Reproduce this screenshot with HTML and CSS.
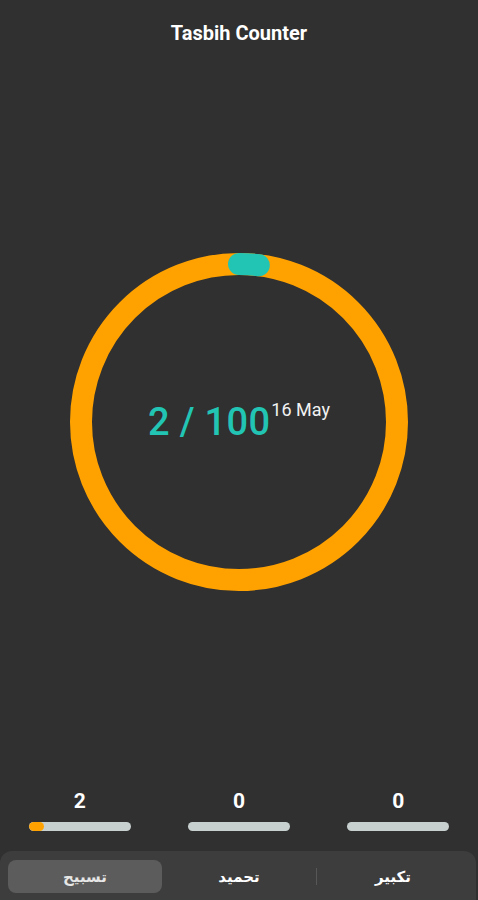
FILE: index.html
```html
<!DOCTYPE html>
<html lang="en">
<head>
<meta charset="utf-8">
<title>Tasbih Counter</title>
<link rel="stylesheet" href="styles.css">
</head>
<body>
<div class="app">
  <header class="header">Tasbih Counter</header>
  <main class="main">
    <div class="ring">
      <svg class="ring-svg" width="338" height="338" viewBox="0 0 338 338">
        <circle cx="169" cy="169" r="158" fill="none" stroke="#ffa200" stroke-width="22"/>
        <path d="M169 11 A158 158 0 0 1 188.8 12.25" fill="none" stroke="#22c4b4" stroke-width="22" stroke-linecap="round"/>
      </svg>
      <div class="ring-center">
        <span class="count">2 / 100</span><span class="date">16 May</span>
      </div>
    </div>
  </main>
  <section class="stats">
    <div class="stat">
      <div class="stat-num">2</div>
      <div class="bar"><div class="bar-fill" style="width:15%"></div></div>
    </div>
    <div class="stat">
      <div class="stat-num">0</div>
      <div class="bar"></div>
    </div>
    <div class="stat">
      <div class="stat-num">0</div>
      <div class="bar"></div>
    </div>
  </section>
  <nav class="tabs">
    <div class="tab active">تسبيح</div>
    <div class="tab">تحميد</div>
    <div class="tab divided">تكبير</div>
  </nav>
</div>
</body>
</html>
```
FILE: styles.css
```css
* { box-sizing: border-box; }
html, body {
  margin: 0;
  padding: 0;
  background: #303030;
  font-family: Roboto, "Noto Sans", "DejaVu Sans", sans-serif;
  color: #fff;
}
.app {
  width: 478px;
  height: 900px;
  display: flex;
  flex-direction: column;
}
.header {
  padding-top: 21px;
  height: 44px;
  line-height: 24px;
  font-size: 20px;
  font-weight: 700;
  text-align: center;
}
.main {
  padding-top: 209px;
  display: flex;
  justify-content: center;
}
.ring {
  position: relative;
  width: 338px;
  height: 338px;
}
.ring-svg { display: block; }
.ring-center {
  position: absolute;
  inset: 0;
  display: flex;
  align-items: center;
  justify-content: center;
  padding-left: 0;
  padding-bottom: 0;
}
.count {
  font-size: 38px;
  font-weight: 500;
  letter-spacing: 0.3px;
  color: #22c4b4;
  line-height: 40px;
}
.date {
  font-size: 18px;
  color: #f2f2f2;
  align-self: center;
  margin-top: -26px;
  margin-left: 1px;
}
.stats {
  margin-top: auto;
  display: grid;
  grid-template-columns: 1fr 1fr 1fr;
  padding-bottom: 20px;
}
.stat {
  display: flex;
  flex-direction: column;
  align-items: center;
  gap: 10px;
}
.stat-num {
  font-size: 21px;
  font-weight: 700;
  line-height: 22px;
}
.bar {
  width: 102px;
  height: 9px;
  border-radius: 5px;
  background: #c7d0cf;
  overflow: hidden;
}
.bar-fill {
  height: 100%;
  background: #ffa200;
  border-radius: 5px;
}
.tabs {
  height: 49px;
  margin-right: 2px;
  background: #3d3d3d;
  border-radius: 12px 12px 0 0;
  display: grid;
  grid-template-columns: 1fr 1fr 1fr;
  padding: 9px 6px 7px 8px;
}
.tab {
  display: flex;
  align-items: center;
  justify-content: center;
  font-family: "DejaVu Sans", "Noto Sans", sans-serif;
  font-size: 15px;
  font-weight: 700;
  color: #fff;
  border-radius: 8px;
  position: relative;
}
.tab.active {
  background: #5c5c5c;
  color: #e6e6e6;
}
.tab.divided::before {
  content: "";
  position: absolute;
  left: 0;
  top: 8px;
  bottom: 8px;
  width: 1px;
  background: #575757;
}
```
